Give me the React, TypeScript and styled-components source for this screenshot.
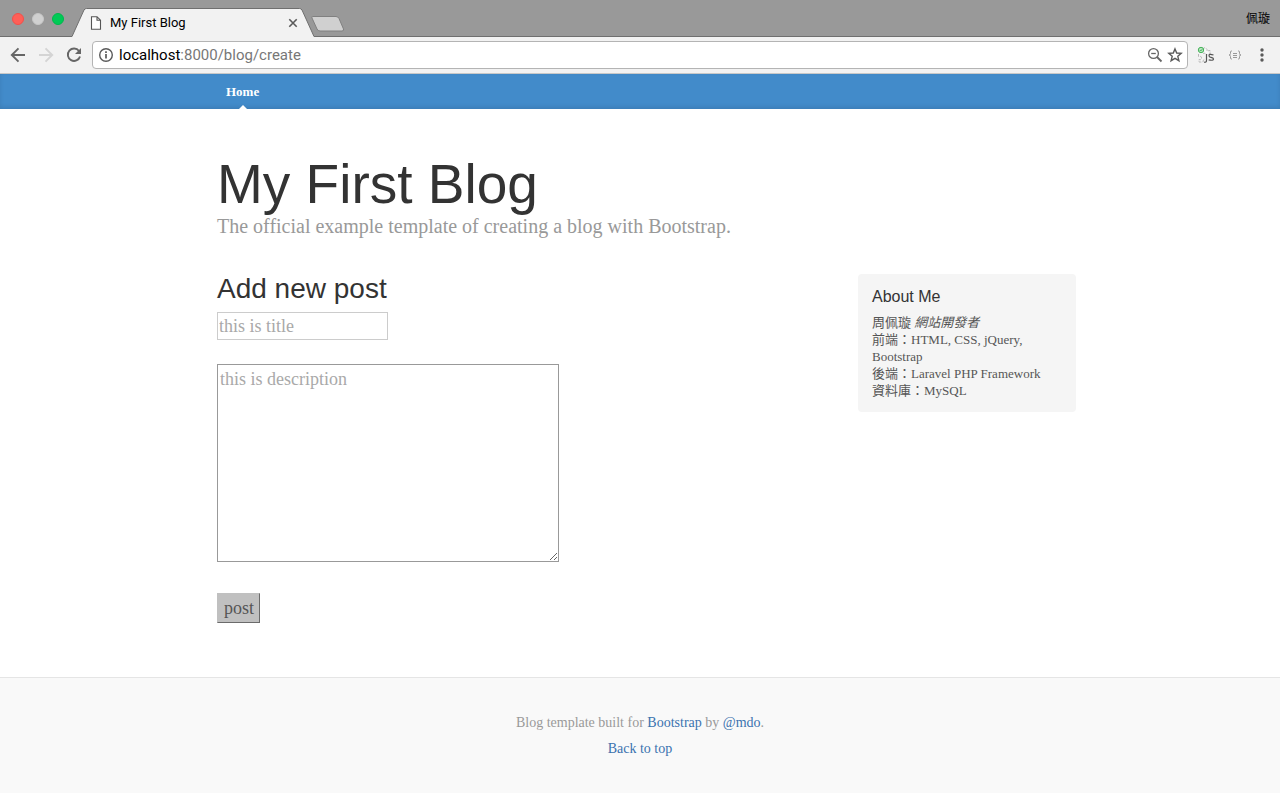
import React from "react";
import styled, { createGlobalStyle } from "styled-components";

const serif = `"Liberation Serif", "Noto Sans CJK TC", serif`;
const sans = `"Liberation Sans", "Noto Sans CJK TC", sans-serif`;
const ui = `Roboto, "Noto Sans CJK TC", sans-serif`;

const GlobalStyle = createGlobalStyle`
  *, *::before, *::after { box-sizing: border-box; }
  body { margin: 0; background: #fff; color: #555; font-family: ${serif}; font-size: 18px; }
  h1, h2, h3, h4, p { margin: 0; font-weight: 400; }
  button, input, textarea { font: inherit; }
`;

const TabStrip = styled.div`
  display: flex;
  align-items: flex-end;
  height: 37px;
  padding: 0 10px 0 12px;
  background: #999;
  box-shadow: inset 0 -1px #6f6f6f;
  font-family: ${ui};
`;

const WindowControls = styled.div`
  display: flex;
  align-self: center;
  gap: 8px;
  width: 60px;
`;

const WindowButton = styled.button<{ $fill: string; $edge: string }>`
  width: 12px;
  height: 12px;
  padding: 0;
  border: 1px solid ${(p) => p.$edge};
  border-radius: 50%;
  background: ${(p) => p.$fill};
`;

const Tab = styled.div`
  position: relative;
  display: flex;
  align-items: center;
  width: 242px;
  height: 29px;
  padding: 0 16px 0 18px;
  color: #000;
  font-size: 13px;
`;

const TabShape = styled.svg`
  position: absolute;
  inset: 0;
`;

const TabTitle = styled.span`
  position: relative;
  flex: 1;
  margin-left: 8px;
  line-height: 20px;
`;

const IconButton = styled.button`
  position: relative;
  display: flex;
  align-items: center;
  justify-content: center;
  flex: none;
  padding: 0;
  border: 0;
  background: none;
  color: #5a5a5a;

  svg { overflow: visible; }
`;

const PageIcon = styled.svg`
  position: relative;
  flex: none;
`;

const Profile = styled.button`
  align-self: center;
  margin-left: auto;
  padding: 0;
  border: 0;
  background: none;
  color: #000;
  font-size: 12px;
  line-height: 16px;
`;

const Toolbar = styled.div`
  display: flex;
  align-items: center;
  gap: 8px;
  height: 37px;
  padding: 0 10px;
  background: #f2f2f2;
  border-bottom: 1px solid #c8c8c8;
  font-family: ${ui};
`;

const NavButtons = styled.div`
  display: flex;
  gap: 12px;
  width: 74px;
`;

const AddressBar = styled.div`
  display: flex;
  flex: 1;
  align-items: center;
  height: 28px;
  padding: 0 4px 0 5px;
  background: #fff;
  border: 1px solid #b4b4b4;
  border-radius: 4px;
  font-size: 15px;
`;

const Host = styled.label`
  margin-left: 5px;
  color: #000;
`;

const AddressInput = styled.input`
  flex: 1;
  min-width: 0;
  padding: 0;
  border: 0;
  outline: 0;
  background: none;
  color: #777;
`;

const AddressActions = styled.div`
  display: flex;
  gap: 4px;
`;

const Extensions = styled.div`
  display: flex;
  align-items: center;
  justify-content: space-between;
  width: 74px;
`;

const Container = styled.div`
  max-width: 872px;
  margin: 0 auto;
  padding-left: 13px;
`;

const Masthead = styled.header`
  background: #428bca;
  box-shadow: inset 0 -2px 4px rgba(0, 0, 0, 0.1);
`;

const BlogNav = styled.nav`
  display: flex;
`;

const NavLink = styled.a`
  position: relative;
  padding: 9px;
  color: #fff;
  font-size: 13px;
  font-weight: 700;
  line-height: 17px;
  text-decoration: none;

  &::after {
    content: "";
    position: absolute;
    bottom: 0;
    left: 50%;
    margin-left: -4px;
    border: 4px solid transparent;
    border-top: 0;
    border-bottom-color: #fff;
  }
`;

const BlogHeader = styled.div`
  padding: 45px 0 36px;
`;

const BlogTitle = styled.h1`
  color: #333;
  font-family: ${sans};
  font-size: 55px;
  line-height: 60px;
`;

const Tagline = styled.p`
  color: #999;
  font-size: 20px;
  line-height: 24px;
`;

const Columns = styled.div`
  display: grid;
  grid-template-columns: minmax(0, 1fr) 218px;
  align-items: start;
`;

const PostForm = styled.form`
  display: flex;
  flex-direction: column;
  align-items: flex-start;
`;

const FormTitle = styled.h2`
  margin-bottom: 8px;
  color: #333;
  font-family: ${sans};
  font-size: 28px;
  line-height: 30px;
`;

const TitleInput = styled.input`
  width: 171px;
  height: 28px;
  padding: 1px;
  border: 1px solid #ccc;
  outline: 0;
  background: #fff;
  &::placeholder { color: #a9a9a9; }
`;

const DescriptionInput = styled.textarea`
  width: 342px;
  max-width: 100%;
  height: 198px;
  margin: 24px 0 31px;
  padding: 2px;
  border: 1px solid #999;
  outline: 0;
  background: #fff;
  line-height: 24px;
  &::placeholder { color: #a9a9a9; }
`;

const PostButton = styled.button`
  height: 30px;
  padding: 0 5px 0 6px;
  border: 1px solid;
  border-color: #c0c0c0 #6b6b6b #6b6b6b #c0c0c0;
  background: #c0c0c0;
  color: #555;
`;

const AboutCard = styled.aside`
  padding: 14px 13px 13px 14px;
  background: #f5f5f5;
  border-radius: 4px;
`;

const AboutTitle = styled.h4`
  margin-bottom: 8px;
  color: #333;
  font-family: ${sans};
  font-size: 16px;
  line-height: 18px;
`;

const AboutText = styled.p`
  font-size: 13px;
  line-height: 17px;
`;

const Footer = styled.footer`
  margin-top: 54px;
  padding: 36px 0 27px;
  background: #f9f9f9;
  border-top: 1px solid #e5e5e5;
  color: #999;
  font-size: 14px;
  line-height: 18px;
  text-align: center;
`;

const FooterLine = styled.p`
  margin-bottom: 8px;
`;

const FooterLink = styled.a`
  color: #3b73af;
  text-decoration: none;
`;

function BrowserTabs() {
  return (
    <TabStrip>
      <WindowControls>
        <WindowButton $fill="#ff5f57" $edge="#f2504a" aria-label="Close window" />
        <WindowButton $fill="#d0d0d0" $edge="#c6c6c6" aria-label="Minimize window" />
        <WindowButton $fill="#00ca56" $edge="#00b84c" aria-label="Zoom window" />
      </WindowControls>
      <Tab>
        <TabShape width="242" height="29" viewBox="0 0 242 29" aria-hidden="true">
          <path d="M0 29V28.500L12 2Q13 .5 14.500 .5H227.500Q229 .5 230 2L242 28.500V29Z" fill="#f2f2f2" />
          <path d="M0 28.500L12 2Q13 .5 14.500 .5H227.500Q229 .5 230 2L242 28.500" fill="none" stroke="#6f6f6f" />
        </TabShape>
        <PageIcon width="12" height="14" viewBox="0 0 12 14" fill="#fff" stroke="#555" strokeWidth="1.1" aria-hidden="true">
          <path d="M1.500 .7H7L10.500 4.200V13.300H1.500ZM7 .7V4.200H10.500" />
        </PageIcon>
        <TabTitle>My First Blog</TabTitle>
        <IconButton aria-label="Close tab">
          <svg width="10" height="10" viewBox="0 0 10 10" stroke="currentColor" strokeWidth="1.600">
            <path d="M1.300 1.300L8.700 8.700M8.700 1.300L1.300 8.700" />
          </svg>
        </IconButton>
      </Tab>
      <IconButton aria-label="New tab">
        <svg width="34" height="22" viewBox="0 0 34 22">
          <path d="M-1.500 1.500H22Q24 1.500 25 3.500L29.500 14Q30 16 28 16H6Q4 16 3 14L-2 3Q-2.500 1.500 -1.500 1.500Z" fill="#d0d0d0" stroke="#808080" />
        </svg>
      </IconButton>
      <Profile>佩璇</Profile>
    </TabStrip>
  );
}

function BrowserToolbar() {
  return (
    <Toolbar>
      <NavButtons>
        <IconButton aria-label="Back">
          <svg width="16" height="16" viewBox="0 0 16 16" fill="none" stroke="#666" strokeWidth="1.900">
            <path d="M15 8H2M8.500 1.300L1.800 8L8.500 14.700" />
          </svg>
        </IconButton>
        <IconButton aria-label="Forward" disabled>
          <svg width="16" height="16" viewBox="0 0 16 16" fill="none" stroke="#d4d4d4" strokeWidth="1.900">
            <path d="M1 8H14M7.500 1.300L14.200 8L7.500 14.700" />
          </svg>
        </IconButton>
        <IconButton aria-label="Reload">
          <svg width="16" height="16" viewBox="0 0 16 16" fill="none" stroke="#666" strokeWidth="1.900">
            <path d="M13 4A6.200 6.200 0 1 0 14 9.500" />
            <path d="M15 1V7H9Z" fill="#666" stroke="none" />
          </svg>
        </IconButton>
      </NavButtons>
      <AddressBar>
        <IconButton type="button" aria-label="Site information">
          <svg width="16" height="16" viewBox="0 0 16 16" fill="none" stroke="#5a5a5a">
            <circle cx="8" cy="8" r="6.300" strokeWidth="1.400" />
            <path d="M8 7V11.500M8 4.300V6" strokeWidth="1.700" />
          </svg>
        </IconButton>
        <Host htmlFor="address">localhost</Host>
        <AddressInput id="address" defaultValue=":8000/blog/create" />
        <AddressActions>
          <IconButton aria-label="Zoom level">
            <svg width="16" height="16" viewBox="0 0 16 16" fill="none" stroke="#666" strokeWidth="1.300">
              <circle cx="6.500" cy="6.500" r="4.900" />
              <path d="M10 10L14.500 14.500" strokeWidth="1.800" />
              <path d="M4.200 6.500H8.800" />
            </svg>
          </IconButton>
          <IconButton aria-label="Bookmark this page">
            <svg width="16" height="16" viewBox="0 0 16 16" fill="none" stroke="#5a5a5a" strokeWidth="1.400">
              <path d="M8 1.900L9.700 6L14.200 6.400L10.800 9.300L11.900 13.700L8 11.300L4.100 13.700L5.200 9.300L1.800 6.400L6.300 6Z" />
            </svg>
          </IconButton>
        </AddressActions>
      </AddressBar>
      <Extensions>
        <IconButton aria-label="JavaScript toggle">
          <svg width="20" height="18" viewBox="0 0 20 18" fill="none">
            <path d="M7 3.500Q7.500 1 9.500 2T11 5L14 4.500V8L11.500 8.500M2.500 8V10.500Q5.500 9.500 5.500 12T3 13.500V16H6.500M7 16Q7 13.500 8.500 13.500M7 7.500Q9 6 9.500 9" fill="#f8f8f8" stroke="#b8b8b8" strokeDasharray="3 1" />
            <circle cx="5" cy="4" r="2.700" fill="#b5e3bd" stroke="#48b45b" />
            <path d="M3.800 4L4.700 5L6.300 3.200" stroke="#48b45b" />
            <path d="M10.500 8V14.500Q10.500 16.500 8 16.200M17.500 9Q13 7.400 13 9.700Q13 11 15 11.300Q17.500 11.700 17.500 13Q17.500 15 12.700 13.800" stroke="#555" strokeWidth="1.200" />
          </svg>
        </IconButton>
        <IconButton aria-label="JSON viewer">
          <svg width="14" height="12" viewBox="0 0 14 12" fill="none" stroke="#999">
            <path d="M4 2H3.500Q2.500 2 2.500 3V4.500Q2.500 6 1 6Q2.500 6 2.500 7.500V9Q2.500 10 3.500 10H4M10 2H10.500Q11.500 2 11.500 3V4.500Q11.500 6 13 6Q11.500 6 11.500 7.500V9Q11.500 10 10.500 10H10M5 4.500H9M5 6.500H9M5 8.500H9" />
          </svg>
        </IconButton>
        <IconButton aria-label="Menu">
          <svg width="16" height="16" viewBox="0 0 16 16" fill="#5a5a5a">
            <circle cx="8" cy="3" r="1.700" />
            <circle cx="8" cy="8" r="1.700" />
            <circle cx="8" cy="13" r="1.700" />
          </svg>
        </IconButton>
      </Extensions>
    </Toolbar>
  );
}

export default function App() {
  return (
    <>
      <GlobalStyle />
      <BrowserTabs />
      <BrowserToolbar />
      <Masthead>
        <Container>
          <BlogNav>
            <NavLink href="#home">Home</NavLink>
          </BlogNav>
        </Container>
      </Masthead>
      <Container as="main">
        <BlogHeader>
          <BlogTitle>My First Blog</BlogTitle>
          <Tagline>The official example template of creating a blog with Bootstrap.</Tagline>
        </BlogHeader>
        <Columns>
          <PostForm onSubmit={(e) => e.preventDefault()}>
            <FormTitle>Add new post</FormTitle>
            <TitleInput aria-label="Title" placeholder="this is title" />
            <DescriptionInput aria-label="Description" placeholder="this is description" />
            <PostButton type="submit">post</PostButton>
          </PostForm>
          <AboutCard>
            <AboutTitle>About Me</AboutTitle>
            <AboutText>
              周佩璇 <em>網站開發者</em>
              <br />
              前端：HTML, CSS, jQuery, Bootstrap
              <br />
              後端：Laravel PHP Framework
              <br />
              資料庫：MySQL
            </AboutText>
          </AboutCard>
        </Columns>
      </Container>
      <Footer>
        <FooterLine>
          Blog template built for <FooterLink href="#bootstrap">Bootstrap</FooterLink> by{" "}
          <FooterLink href="#mdo">@mdo</FooterLink>.
        </FooterLine>
        <FooterLine>
          <FooterLink href="#top">Back to top</FooterLink>
        </FooterLine>
      </Footer>
    </>
  );
}
